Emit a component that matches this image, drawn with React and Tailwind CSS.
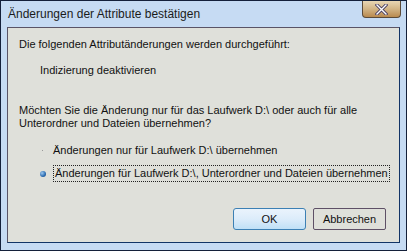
import React from 'react'

function CloseButton() {
  return (
    <div className="absolute left-[361px] top-0 w-[39px] h-[17px] rounded-b-[4px] border border-t-0 border-[#5b4a38] bg-gradient-to-b from-[#e8d6b4] via-[#d2b485] to-[#b98a4e] flex items-center justify-center">
      <svg width="13" height="11" viewBox="0 0 13 11">
        <path d="M2 1 L11 10 M11 1 L2 10" stroke="#4a3f62" strokeWidth="3.2" strokeLinecap="square" />
        <path d="M2 1 L11 10 M11 1 L2 10" stroke="#ffffff" strokeWidth="1.4" strokeLinecap="square" />
      </svg>
    </div>
  )
}

function Radio({ checked }) {
  return (
    <span className="w-[13px] h-[13px] flex items-center justify-center shrink-0">
      {checked ? (
        <span className="w-[6px] h-[6px] rounded-full bg-[radial-gradient(circle_at_35%_35%,#9cc8f0,#2a6bb0_60%,#1b3f78)]" />
      ) : (
        <span className="w-[1px] h-[1px] bg-[#9a9a9a]" />
      )}
    </span>
  )
}

export default function App() {
  const body = { fontFamily: '"Liberation Sans", Arial, sans-serif' }
  return (
    <div className="w-[407px] h-[251px] relative bg-[#c6dbf3] border border-[#14203a] flex flex-col overflow-hidden">
      {/* Title bar */}
      <div className="h-[26px] flex items-center pl-[7px] text-[12px] text-[#1b1b1b]" style={body}>
        Änderungen der Attribute bestätigen
      </div>
      <CloseButton />

      {/* Client area */}
      <div
        className="flex-1 ml-[6px] mr-[6px] mb-[7px] bg-[#dfe0da] border border-t-[#5a5466] border-l-[#5a5466] border-r-[#123466] border-b-[#123466] flex flex-col text-[11px] leading-[13px] text-[#111]"
        style={body}
      >
        <div className="pt-[10px] pl-[11px]">Die folgenden Attributänderungen werden durchgeführt:</div>
        <div className="mt-[13px] pl-[32px]">Indizierung deaktivieren</div>
        <div className="mt-[27px] pl-[11px]">
          Möchten Sie die Änderung nur für das Laufwerk D:\ oder auch für alle
          <br />
          Unterordner und Dateien übernehmen?
        </div>

        <div className="mt-[14px] pl-[28px] flex items-center gap-[3px]">
          <Radio />
          <span className="pl-[1px]">Änderungen nur für Laufwerk D:\ übernehmen</span>
        </div>
        <div className="mt-[8px] pl-[28px] flex items-center gap-[4px]">
          <Radio checked />
          <span className="border border-dotted border-[#222] px-[1px] py-[1px]">
            Änderungen für Laufwerk D:\, Unterordner und Dateien übernehmen
          </span>
        </div>

        <div className="flex-1" />
        <div className="flex justify-end gap-[7px] mr-[13px] mb-[12px]">
          <button className="w-[73px] h-[22px] rounded-[3px] border border-[#3c80b4] bg-gradient-to-b from-[#eaf3fc] via-[#dcecfa] to-[#bfe0f6] text-[11px] text-[#111]" style={body}>
            OK
          </button>
          <button className="w-[73px] h-[22px] rounded-[2px] border border-[#5e5066] bg-[#dfe0da] text-[11px] text-[#111]" style={body}>
            Abbrechen
          </button>
        </div>
      </div>
    </div>
  )
}
